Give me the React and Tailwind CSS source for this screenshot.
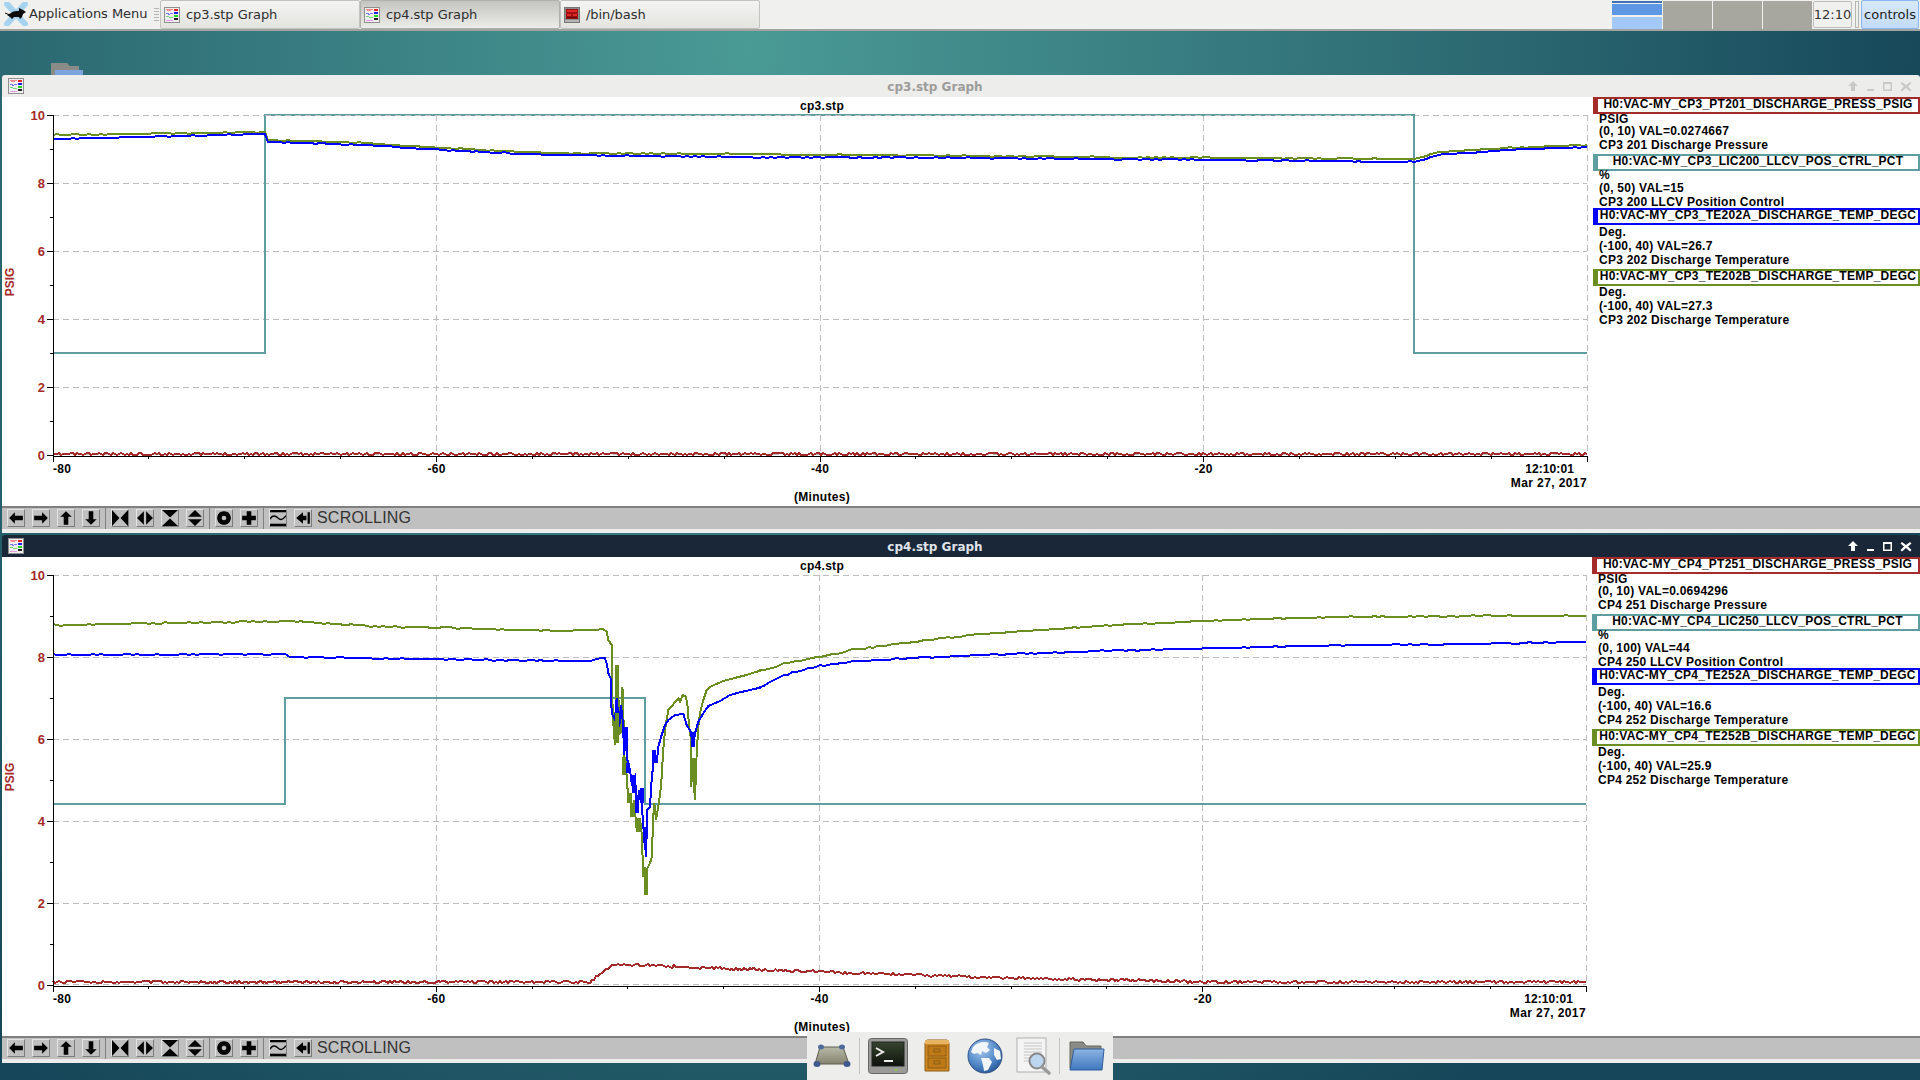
import React from 'react';

const RED = '#a52a2a';
const TEAL = '#5f9ea0';
const BLUE = '#0000ff';
const OLIVE = '#6b8e23';

// small seeded random so the noise is the same on every load
const makeRand = (seed) => {
  let s = seed;
  return () => {
    s = (s * 16807) % 2147483647;
    return s / 2147483647;
  };
};

const wiggle = (pts, step, amp, seed) => {
  const rand = makeRand(seed);
  const out = [];
  for (let i = 0; i < pts.length - 1; i++) {
    const [x1, y1] = pts[i];
    const [x2, y2] = pts[i + 1];
    const n = Math.max(1, Math.round((x2 - x1) / step));
    for (let k = 0; k < n; k++) {
      const t = k / n;
      out.push([x1 + (x2 - x1) * t, Math.round(y1 + (y2 - y1) * t + (rand() - 0.5) * amp)]);
    }
  }
  out.push(pts[pts.length - 1]);
  return out;
};

const toLine = (pts) => pts.map((p) => p.join(',')).join(' ');
// crop coordinates of the dip -> page coordinates
const dip = (pts) => pts.map(([x, y]) => [560 + x / 3, 600 + y / 3]);

const cp3Traces = [
  { color: TEAL, pts: [[53, 353], [265, 353], [265, 115], [1414, 115], [1414, 353], [1587, 353]] },
  { color: RED, pts: wiggle([[53, 454], [1587, 454]], 2, 2.6, 11) },
  { color: OLIVE, pts: wiggle([[53, 135], [265, 132], [268, 140], [367, 143], [441, 148], [551, 153], [735, 154], [980, 156], [1224, 158], [1414, 159], [1439, 152], [1506, 148], [1587, 145]], 4, 1, 23) },
  { color: BLUE, pts: wiggle([[53, 139], [265, 134], [268, 142], [367, 145], [441, 150], [551, 155], [735, 157], [980, 158], [1224, 160], [1414, 162], [1439, 155], [1506, 150], [1587, 147]], 4, 1, 37) },
];

const cp4Olive = [
  ...wiggle([[53, 625], [285, 621], [367, 626], [490, 629], [560, 631]], 4, 1.4, 41),
  ...dip([[130, 88], [140, 95], [145, 120], [155, 135], [157, 300], [160, 370], [165, 435], [168, 240], [172, 195], [175, 280], [178, 400], [183, 395], [187, 260], [190, 300], [192, 520], [197, 470], [200, 530], [205, 600], [212, 580], [217, 650], [222, 600], [230, 690], [240, 655], [245, 700], [250, 830], [255, 800], [258, 885], [262, 805], [270, 790], [277, 765], [278, 670], [283, 610], [288, 660], [295, 620], [303, 560], [308, 480], [312, 420], [318, 370], [325, 330], [335, 320], [345, 305], [355, 295], [360, 305], [368, 285], [378, 290], [383, 320], [387, 380], [392, 410], [393, 560], [398, 475], [400, 530], [405, 600], [410, 460], [415, 380], [420, 340], [430, 300], [440, 270], [455, 258], [490, 243], [520, 235], [560, 225], [600, 212]]),
  ...wiggle([[760, 671], [784, 664], [857, 649], [980, 634], [1102, 626], [1224, 620], [1347, 617], [1469, 616], [1586, 616]], 4, 1.2, 43),
];

const cp4Blue = [
  ...wiggle([[53, 655], [285, 654], [290, 657], [490, 660], [560, 661]], 4, 1.2, 47),
  ...dip([[90, 183], [125, 173], [135, 175], [140, 190], [145, 220], [152, 235], [155, 340], [160, 350], [165, 360], [170, 295], [178, 380], [183, 315], [188, 360], [193, 465], [197, 380], [203, 490], [210, 510], [215, 550], [225, 530], [232, 640], [238, 570], [245, 610], [250, 680], [255, 730], [258, 770], [262, 630], [270, 620], [275, 540], [280, 490], [283, 450], [290, 490], [295, 440], [305, 405], [315, 375], [325, 360], [345, 345], [370, 342], [380, 375], [392, 395], [400, 440], [405, 400], [415, 365], [430, 340], [445, 318], [480, 303], [510, 285], [540, 277], [600, 263]]),
  ...wiggle([[760, 688], [784, 675], [820, 666], [857, 661], [980, 655], [1102, 651], [1224, 648], [1347, 645], [1469, 644], [1586, 642]], 4, 1.2, 53),
];

const oliveThick = [[172, 195, 290], [192, 470, 525], [207, 580, 610], [217, 610, 650], [235, 655, 695], [258, 805, 885], [400, 475, 545], [170, 340, 430]];
const blueThick = [[198, 380, 430], [205, 490, 520], [222, 525, 580], [232, 585, 640], [245, 565, 610], [255, 680, 730], [283, 450, 490], [400, 395, 440]];

const cp4Traces = [
  { color: TEAL, pts: [[53, 804], [285, 804], [285, 698], [645, 698], [645, 804], [1586, 804]] },
  { color: RED, pts: wiggle([[53, 982], [590, 982], [602, 972], [612, 965], [640, 965], [686, 967], [857, 973], [1041, 979], [1224, 982], [1586, 982]], 2, 2.4, 59) },
  { color: OLIVE, pts: cp4Olive },
  { color: BLUE, pts: cp4Blue },
];

const legendCp3 = [
  { label: 'H0:VAC-MY_CP3_PT201_DISCHARGE_PRESS_PSIG', box: 'border-[#a52a2a] mt-0', unit: 'PSIG', unitCls: '-mt-[2px]', range: '(0, 10) VAL=0.0274667', rangeCls: '-mt-[2px]', desc: 'CP3 201 Discharge Pressure' },
  { label: 'H0:VAC-MY_CP3_LIC200_LLCV_POS_CTRL_PCT', box: 'border-[#5f9ea0] mt-[2px]', unit: '%', unitCls: '-mt-[3px]', range: '(0, 50) VAL=15', rangeCls: '-mt-[1px]', desc: 'CP3 200 LLCV Position Control' },
  { label: 'H0:VAC-MY_CP3_TE202A_DISCHARGE_TEMP_DEGC', box: 'border-[#0000ff] -mt-[1px]', unit: 'Deg.', unitCls: 'mt-0', range: '(-100, 40) VAL=26.7', rangeCls: 'mt-0', desc: 'CP3 202 Discharge Temperature' },
  { label: 'H0:VAC-MY_CP3_TE202B_DISCHARGE_TEMP_DEGC', box: 'border-[#6b8e23] mt-[2px]', unit: 'Deg.', unitCls: '-mt-[1px]', range: '(-100, 40) VAL=27.3', rangeCls: 'mt-0', desc: 'CP3 202 Discharge Temperature' },
];

const legendCp4 = [
  { label: 'H0:VAC-MY_CP4_PT251_DISCHARGE_PRESS_PSIG', box: 'border-[#a52a2a] mt-0', unit: 'PSIG', unitCls: '-mt-[2px]', range: '(0, 10) VAL=0.0694296', rangeCls: '-mt-[2px]', desc: 'CP4 251 Discharge Pressure' },
  { label: 'H0:VAC-MY_CP4_LIC250_LLCV_POS_CTRL_PCT', box: 'border-[#5f9ea0] mt-[2px]', unit: '%', unitCls: '-mt-[3px]', range: '(0, 100) VAL=44', rangeCls: '-mt-[1px]', desc: 'CP4 250 LLCV Position Control' },
  { label: 'H0:VAC-MY_CP4_TE252A_DISCHARGE_TEMP_DEGC', box: 'border-[#0000ff] -mt-[1px]', unit: 'Deg.', unitCls: 'mt-0', range: '(-100, 40) VAL=16.6', rangeCls: 'mt-0', desc: 'CP4 252 Discharge Temperature' },
  { label: 'H0:VAC-MY_CP4_TE252B_DISCHARGE_TEMP_DEGC', box: 'border-[#6b8e23] mt-[2px]', unit: 'Deg.', unitCls: '-mt-[1px]', range: '(-100, 40) VAL=25.9', rangeCls: 'mt-0', desc: 'CP4 252 Discharge Temperature' },
];

const GraphIcon = ({ className }) => (
  <svg viewBox="0 0 16 16" className={className} shapeRendering="crispEdges">
    <rect x="0.5" y="0.5" width="15" height="15" fill="#f1eef1" stroke="#8f8f8f" />
    <path d="M2 3 L3 2 L4 4 L5 2 L6 4 L7 2 L9 3" fill="none" stroke="#f08a8a" />
    <path d="M2 7 L4 6 L5 8 L7 6 L9 7" fill="none" stroke="#7a7af0" />
    <path d="M2 10 L4 9 L6 11 L9 10" fill="none" stroke="#6fdc6f" />
    <path d="M2 13 L9 13" fill="none" stroke="#e39ae3" />
    <rect x="10" y="2" width="4" height="2" fill="#e82020" />
    <rect x="10" y="5" width="4" height="2" fill="#2020e8" />
    <rect x="10" y="8" width="4" height="2" fill="#20d820" />
    <rect x="10" y="11" width="4" height="2" fill="#202020" />
  </svg>
);

const TermIcon = ({ className }) => (
  <svg viewBox="0 0 16 16" className={className} shapeRendering="crispEdges">
    <rect x="0.5" y="0.5" width="15" height="15" rx="1" fill="#8c8c8c" stroke="#777" />
    <rect x="2" y="2" width="12" height="10" fill="#9c1010" />
    <path d="M3 3h10v2H3zM3 7h4v2H3zM9 7h4v2H9z" fill="#e02a2a" />
    <path d="M3 10h10v1H3z" fill="#600808" />
    <rect x="1" y="13" width="14" height="2" fill="#b4b4b4" />
  </svg>
);

const XfceLogo = () => (
  <svg viewBox="0 0 24 24" className="w-[24px] h-[24px]">
    <path d="M3 2 L21 22 M21 2 L3 22" stroke="#a6d3f0" strokeWidth="6" strokeLinecap="round" />
    <path d="M3 13 L7 11 C9 9 12 9 15 9 L15 6 L17 7 L19 8 L22 10 L19 12 L18 15 L16 17 L15 15 L10 15 L8 17 L6 15 Z" fill="#0c0c0c" />
    <path d="M6 13 L1 11" stroke="#0c0c0c" strokeWidth="1" />
  </svg>
);

const Handle = () => (
  <div className="w-[5px] h-[14px] bg-[repeating-linear-gradient(0deg,#b5b5b2_0px,#b5b5b2_1px,#f0f0ee_1px,#f0f0ee_3px)]" />
);

const Tab = ({ icon, label, active }) => (
  <div className={active
    ? 'w-[200px] h-[29px] flex items-center gap-[6px] pl-[3px] border border-[#b0b0ac] rounded-[2px] bg-gradient-to-b from-[#c4c4c0] to-[#ecece9]'
    : 'w-[200px] h-[29px] flex items-center gap-[6px] pl-[3px] border border-[#c2c2be] rounded-[2px] bg-gradient-to-b from-[#f4f4f2] to-[#e3e3df]'}>
    {icon}
    <span className="text-[13px] tracking-[-0.05px] text-[#2e2e2e]">{label}</span>
  </div>
);

const TaskBar = () => (
  <div className="h-[31px] flex items-start bg-[#f0f0ee] border-b-2 border-[#a3a39f] font-['DejaVu_Sans',sans-serif]">
    <div className="w-[154px] h-[28px] flex items-center pl-[4px] gap-[1px]">
      <XfceLogo />
      <span className="text-[13px] tracking-[-0.05px] text-[#2e2e2e] whitespace-nowrap">Applications Menu</span>
    </div>
    <div className="w-[6px] h-[28px] flex items-center"><Handle /></div>
    <Tab icon={<GraphIcon className="w-[16px] h-[16px]" />} label="cp3.stp Graph" />
    <Tab active icon={<GraphIcon className="w-[16px] h-[16px]" />} label="cp4.stp Graph" />
    <Tab icon={<TermIcon className="w-[16px] h-[16px]" />} label="/bin/bash" />
    <div className="flex-1" />
    <div className="w-[50px] h-[28px] mt-[1px] flex flex-col">
      <div className="h-[2px] bg-[#3f70b6]" />
      <div className="h-[11px] mt-[1px] bg-[#5e97e4]" />
      <div className="h-[12px] mt-[2px] bg-[#a3c8fa]" />
    </div>
    <div className="w-[49px] h-[28px] mt-[1px] ml-[1px] bg-[#a8a79f]" />
    <div className="w-[49px] h-[28px] mt-[1px] ml-[1px] bg-[#a8a79f]" />
    <div className="w-[49px] h-[28px] mt-[1px] ml-[1px] bg-[#a8a79f]" />
    <div className="w-[39px] h-[27px] mt-[1px] ml-[1px] flex items-center justify-center border border-[#bdbdb9] rounded-[2px] text-[13px] text-[#333]">12:10</div>
    <div className="w-[4px] h-[27px] mt-[1px] ml-[3px] border border-[#b5b5b2]" />
    <div className="w-[58px] h-[29px] ml-[2px] mr-[1px] flex items-center justify-center border border-[#8ab6ee] rounded-[2px] bg-gradient-to-b from-[#d8e8fc] to-[#c3dbf9] text-[13px] text-[#222]">controls</div>
  </div>
);

const TitleBar = ({ title, active }) => (
  <div className={active
    ? 'h-[22px] flex items-center rounded-t-[3px] bg-[#1a2739] text-[#dfe3e8]'
    : 'h-[22px] flex items-center rounded-t-[3px] bg-[#ededeb] text-[#9c9c9a]'}>
    <GraphIcon className="w-[16px] h-[16px] ml-[6px] mr-[4px] shrink-0" />
    <div className="w-[1814px] pt-[2px] text-center text-[12px] font-bold font-['DejaVu_Sans',sans-serif]">{title}</div>
    <svg viewBox="0 0 70 14" className="w-[70px] h-[14px] ml-[4px] shrink-0">
      <path className={active ? 'fill-white' : 'fill-[#c9c9c7]'} d="M7 2 L12 7 H9 V12 H5 V7 H2 Z" />
      <rect className={active ? 'fill-white' : 'fill-[#c9c9c7]'} x="21" y="10" width="7" height="2" />
      <path className={active ? 'fill-white' : 'fill-[#c9c9c7]'} d="M37 3 H46 V12 H37 Z M38.500 5 V10.500 H44.500 V5 Z" fillRule="evenodd" />
      <path className={active ? 'fill-white' : 'fill-[#c9c9c7]'} d="M56 3 L60 6 L64 3 L65.500 4.500 L62 7.500 L65.500 11 L64 12.500 L60 9 L56 12.500 L54.500 11 L58 7.500 L54.500 4.500 Z" />
    </svg>
  </div>
);

const Chart = ({ top, height, width, xEnd, y10, y0, title, traces, yLabel, topDash, children }) => {
  const yAt = (v) => y0 - ((y0 - y10) * v) / 10;
  const xAt = (i) => 53 + (i * (xEnd - 53)) / 16;
  return (
    <svg width={width} height={height} viewBox={`2 ${top} ${width} ${height}`} className="shrink-0 block font-['Liberation_Sans',sans-serif]">
      <g shapeRendering="crispEdges">
        {[2, 4, 6, 8, 10].map((v) => (
          <line key={v} x1="53" x2={xEnd} y1={yAt(v)} y2={yAt(v)} stroke="#bdbdbd" strokeDasharray="6 4" />
        ))}
        <line x1="53" x2={xEnd} y1={y0 - 1} y2={y0 - 1} stroke="#bdbdbd" strokeDasharray="6 4" />
        {[4, 8, 12, 16].map((i) => (
          <line key={i} x1={xAt(i)} x2={xAt(i)} y1={y10} y2={y0} stroke="#bdbdbd" strokeDasharray="6 4" />
        ))}
        {traces.map((t) => (
          <polyline key={t.color} points={toLine(t.pts)} fill="none" stroke={t.color} strokeWidth="2" />
        ))}
        {children}
        {topDash && <line x1="265" x2="1414" y1={y10} y2={y10} stroke="#bdbdbd" strokeDasharray="6 4" />}
        <line x1="53" x2="53" y1={y10} y2={y0 + 1} stroke="#000" />
        <line x1="53" x2={xEnd} y1={y0 + 1} y2={y0 + 1} stroke="#000" />
        {Array.from({ length: 17 }, (_, i) => (
          <line key={i} x1={xAt(i)} x2={xAt(i)} y1={y0 + 1} y2={y0 + (i % 4 === 0 ? 7 : 4)} stroke="#000" />
        ))}
        {Array.from({ length: 11 }, (_, i) => (
          <line key={i} x1={i % 2 === 0 ? 47 : 50} x2="53" y1={yAt(i)} y2={yAt(i)} stroke="#000" />
        ))}
      </g>
      {[0, 2, 4, 6, 8, 10].map((v) => (
        <text key={v} x="45" y={yAt(v) + 5} textAnchor="end" className="fill-[#a52a2a] text-[13px] font-bold">{v}</text>
      ))}
      <text x="16" y={yLabel} transform={`rotate(-90 14 ${yLabel})`} textAnchor="middle" className="fill-[#a52a2a] text-[12px] font-bold">PSIG</text>
      <text x="53" y={y0 + 18} className="fill-black text-[12px] font-bold tracking-[0.3px]">-80</text>
      {[['-60', 4], ['-40', 8], ['-20', 12]].map(([s, i]) => (
        <text key={s} x={xAt(i)} y={y0 + 18} textAnchor="middle" className="fill-black text-[12px] font-bold tracking-[0.3px]">{s}</text>
      ))}
      <text x={xEnd - 13} y={y0 + 18} textAnchor="end" className="fill-black text-[12px] font-bold tracking-[0.1px]">12:10:01</text>
      <text x={xEnd} y={y0 + 32} textAnchor="end" className="fill-black text-[12px] font-bold tracking-[0.4px]">Mar 27, 2017</text>
      <text x="822" y={y10 - 5} textAnchor="middle" className="fill-black text-[12px] font-bold tracking-[0.3px]">{title}</text>
      <text x="822" y={y0 + 46} textAnchor="middle" className="fill-black text-[12px] font-bold tracking-[0.3px]">(Minutes)</text>
    </svg>
  );
};

const Legend = ({ items }) => (
  <div className="flex-1 min-w-0 flex flex-col text-[12px] leading-[14px] font-bold text-black font-['Liberation_Sans',sans-serif] tracking-[0.25px] whitespace-nowrap">
    {items.map((it) => (
      <React.Fragment key={it.label}>
        <div className={`h-[17px] flex justify-center border-2 border-l-[5px] leading-[11px] ${it.box}`}>{it.label}</div>
        <div className={`pl-[6px] ${it.unitCls}`}>{it.unit}</div>
        <div className={`pl-[6px] ${it.rangeCls}`}>{it.range}</div>
        <div className="pl-[6px]">{it.desc}</div>
      </React.Fragment>
    ))}
  </div>
);

const ICONS = {
  left: <path d="M1 7 L6 2 V5 H13 V9 H6 V12 Z" />,
  right: <path d="M13 7 L8 2 V5 H1 V9 H8 V12 Z" />,
  up: <path d="M7 1 L2 6 H5 V13 H9 V6 H12 Z" />,
  down: <path d="M7 13 L2 8 H5 V1 H9 V8 H12 Z" />,
  squeezeH: <path d="M0 0 L6.500 7 L0 14 Z M14 0 L7.500 7 L14 14 Z" />,
  stretchH: <path d="M6 1 L0 7 L6 13 Z M8 1 L14 7 L8 13 Z" />,
  squeezeV: <path d="M0 0 H14 L7 6.500 Z M0 14 H14 L7 7.500 Z" />,
  stretchV: <path d="M7 0 L13 6 H1 Z M7 14 L13 8 H1 Z" />,
  ring: <path fillRule="evenodd" d="M7 1 A6 6 0 1 1 6.990 1 Z M7 5 A2 2 0 1 0 7.010 5 Z" />,
  plus: <path d="M5 1 H9 V5 H13 V9 H9 V13 H5 V9 H1 V5 H5 Z" />,
  wave: (
    <>
      <rect x="-1" y="-1" width="16" height="3" />
      <rect x="-1" y="12" width="16" height="3" />
      <path d="M0 8 C2 4 5 5 7 7 S11 9 14 5" fill="none" stroke="#000" strokeWidth="1.200" />
    </>
  ),
  end: <path d="M1 7 L7 2 V5 H10 V9 H7 V12 Z M11 2 H13 V12 H11 Z" />,
};

const ToolBtn = ({ name }) => (
  <div className="w-[18px] h-[18px] flex items-center justify-center border border-t-[#e4e4e4] border-l-[#e4e4e4] border-b-[#7c7c7c] border-r-[#7c7c7c]">
    <svg viewBox="0 0 14 14" className="w-[16px] h-[16px]">{ICONS[name]}</svg>
  </div>
);

const Sep = () => <div className="w-[1px] h-[21px] -mt-[1px] mx-[5px] bg-[#808080]" />;

const ToolBar = () => (
  <div className="h-[23px] flex items-start pt-[1px] pl-[5px] bg-[#c0c0c0] border-t-2 border-[#808080]">
    <div className="flex gap-[7px]">
      {['left', 'right', 'up', 'down'].map((n) => <ToolBtn key={n} name={n} />)}
    </div>
    <Sep />
    <div className="flex gap-[7px]">
      {['squeezeH', 'stretchH', 'squeezeV', 'stretchV'].map((n) => <ToolBtn key={n} name={n} />)}
    </div>
    <Sep />
    <div className="flex gap-[7px]">
      {['ring', 'plus'].map((n) => <ToolBtn key={n} name={n} />)}
    </div>
    <Sep />
    <div className="flex gap-[7px]">
      {['wave', 'end'].map((n) => <ToolBtn key={n} name={n} />)}
    </div>
    <span className="ml-[5px] text-[16px] leading-[18px] tracking-[0.2px] text-[#333] font-['Liberation_Sans',sans-serif]">SCROLLING</span>
  </div>
);

const DockSep = () => <div className="w-[1px] h-[36px] bg-[#c2c2c0]" />;

const Dock = () => (
  <div className="absolute left-[807px] top-[1032px] w-[306px] h-[48px] flex items-center pl-[6px] bg-[#ededeb]">
    <svg viewBox="0 0 38 26" className="w-[38px] h-[26px] mr-[8px]">
      <defs>
        <linearGradient id="padFill" x1="0" y1="0" x2="0" y2="1">
          <stop offset="0" stopColor="#b9b9a8" />
          <stop offset="1" stopColor="#83836f" />
        </linearGradient>
      </defs>
      <path d="M7 4 H30 L36 21 H2 Z" fill="url(#padFill)" stroke="#5d5d50" />
      <ellipse cx="8" cy="4" rx="3" ry="2.500" fill="#4e6a9c" />
      <ellipse cx="29" cy="4" rx="3" ry="2.500" fill="#4e6a9c" />
      <ellipse cx="4" cy="21" rx="3.500" ry="3" fill="#3f5a8c" />
      <ellipse cx="34" cy="21" rx="3.500" ry="3" fill="#3f5a8c" />
    </svg>
    <DockSep />
    <svg viewBox="0 0 40 36" className="w-[40px] h-[36px] ml-[8px]">
      <defs>
        <linearGradient id="screenFill" x1="0" y1="0" x2="0" y2="1">
          <stop offset="0" stopColor="#37452f" />
          <stop offset="1" stopColor="#0d120c" />
        </linearGradient>
      </defs>
      <rect x="0.500" y="0.500" width="39" height="35" rx="3" fill="#9a9a96" stroke="#666" />
      <rect x="4" y="4" width="32" height="24" fill="url(#screenFill)" stroke="#222" />
      <path d="M8 10 L15 14 L8 18" fill="none" stroke="#eee" strokeWidth="2" />
      <rect x="16" y="22" width="9" height="2" fill="#eee" />
      <rect x="27" y="31" width="2" height="2" fill="#8dc63f" />
    </svg>
    <svg viewBox="0 0 28 34" className="w-[28px] h-[34px] ml-[15px]">
      <path d="M2 4 L4 1 H24 L26 4 V32 H2 Z" fill="#d08a24" stroke="#8e5c12" />
      <rect x="2" y="1" width="24" height="4" fill="#e6b463" />
      <rect x="5" y="7" width="18" height="10" fill="#bf7a18" stroke="#8e5c12" />
      <rect x="5" y="19" width="18" height="10" fill="#bf7a18" stroke="#8e5c12" />
      <rect x="11" y="10" width="6" height="3" fill="none" stroke="#8e5c12" />
      <rect x="11" y="22" width="6" height="3" fill="none" stroke="#8e5c12" />
    </svg>
    <svg viewBox="0 0 36 36" className="w-[36px] h-[36px] ml-[16px]">
      <defs>
        <radialGradient id="globeFill" cx="0.400" cy="0.300" r="0.800">
          <stop offset="0" stopColor="#a6c8ee" />
          <stop offset="0.600" stopColor="#4f86c6" />
          <stop offset="1" stopColor="#1f4c8c" />
        </radialGradient>
      </defs>
      <circle cx="18" cy="18" r="17" fill="url(#globeFill)" stroke="#2d4f80" />
      <path d="M6 9 C10 4 18 3 22 5 L20 9 L23 12 L19 15 L15 13 L14 17 L10 15 L7 16 L4 14 Z" fill="#f2f5f8" />
      <path d="M14 20 L22 20 L25 24 L21 32 L17 33 L16 27 Z" fill="#f2f5f8" />
      <path d="M27 10 L33 13 L34 21 L30 22 L27 17 Z" fill="#f2f5f8" />
    </svg>
    <svg viewBox="0 0 36 38" className="w-[36px] h-[38px] ml-[13px]">
      <rect x="1" y="1" width="29" height="34" fill="#f4f4f4" stroke="#b0b0b0" />
      <path d="M8 6 H26 M8 9 H26 M8 12 H26 M8 15 H26 M8 18 H18 M8 21 H15 M8 24 H14" stroke="#c4c4c4" />
      <circle cx="21" cy="24" r="7.500" fill="#bcd6f0" stroke="#8a8a8a" strokeWidth="2" />
      <path d="M26 30 L33 36" stroke="#9a9a9a" strokeWidth="3.500" strokeLinecap="round" />
    </svg>
    <div className="ml-[7px]"><DockSep /></div>
    <svg viewBox="0 0 36 32" className="w-[36px] h-[32px] ml-[9px]">
      <defs>
        <linearGradient id="folderFill" x1="0" y1="0" x2="0" y2="1">
          <stop offset="0" stopColor="#8db4e4" />
          <stop offset="1" stopColor="#3f78c0" />
        </linearGradient>
      </defs>
      <path d="M1 2 H14 L17 6 H32 V28 H1 Z" fill="#8a8a86" stroke="#66665f" />
      <path d="M5 9 H35 L33 30 H1 Z" fill="url(#folderFill)" stroke="#2f5c9c" />
    </svg>
  </div>
);

const App = () => (
  <div className="relative w-[1920px] h-[1080px] overflow-hidden bg-[radial-gradient(ellipse_1500px_1600px_at_750px_50px,#4a9a96_0%,#2b6871_50%,#154659_80%)]">
    <TaskBar />

    <svg viewBox="0 0 32 12" className="absolute left-[51px] top-[63px] w-[32px] h-[12px]">
      <path d="M0 0 H16 L19 3 H28 V12 H0 Z" fill="#8a8a86" />
      <rect x="4" y="7" width="28" height="5" fill="#7ba3dc" />
    </svg>

    <div className="mt-[44px] ml-[2px] flex flex-col">
      <div>
        <TitleBar title="cp3.stp Graph" />
        <div className="flex h-[409px] bg-white overflow-hidden">
          <Chart top={97} height={409} width={1591} xEnd={1587} y10={115} y0={455} title="cp3.stp" yLabel={284} traces={cp3Traces} topDash />
          <Legend items={legendCp3} />
        </div>
        <ToolBar />
        <div className="h-[4px] bg-[#ededeb]" />
      </div>

      <div className="mt-[2px]">
        <TitleBar active title="cp4.stp Graph" />
        <div className="flex h-[479px] bg-white overflow-hidden">
          <Chart top={557} height={479} width={1590} xEnd={1586} y10={575} y0={985} title="cp4.stp" yLabel={779} traces={cp4Traces}>
            {oliveThick.map(([x, a, b]) => (
              <line key={x + a} x1={560 + x / 3} x2={560 + x / 3} y1={600 + a / 3} y2={600 + b / 3} stroke={OLIVE} strokeWidth="4" />
            ))}
            {blueThick.map(([x, a, b]) => (
              <line key={x + a} x1={560 + x / 3} x2={560 + x / 3} y1={600 + a / 3} y2={600 + b / 3} stroke={BLUE} strokeWidth="4" />
            ))}
          </Chart>
          <Legend items={legendCp4} />
        </div>
        <ToolBar />
        <div className="h-[4px] bg-[#ededeb]" />
      </div>
    </div>

    <Dock />
  </div>
);

export default App;
